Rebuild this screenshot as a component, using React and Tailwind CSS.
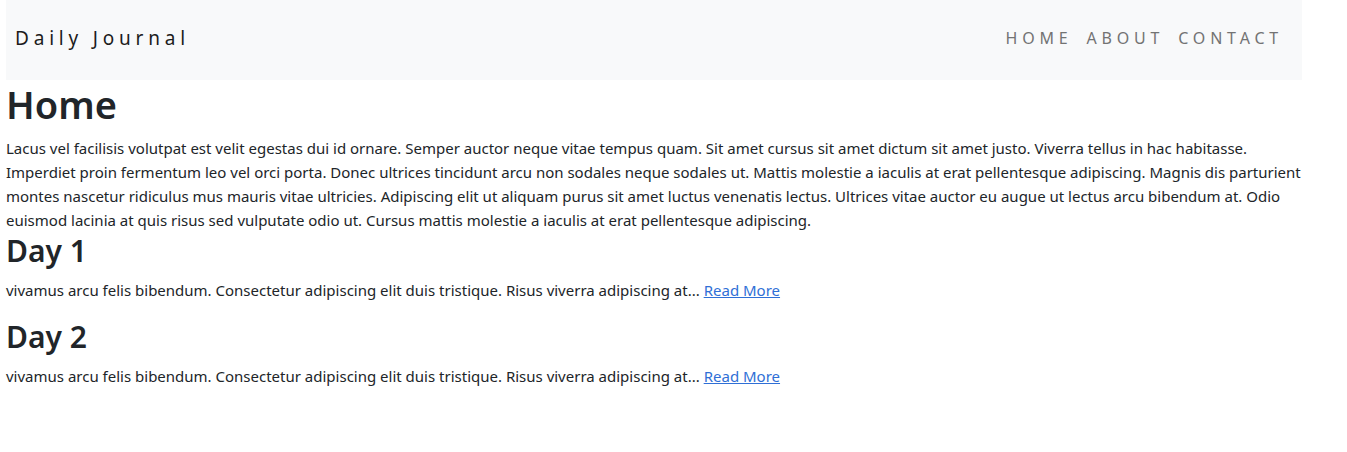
const posts = [
  {
    id: 1,
    title: "Day 1",
    excerpt:
      "vivamus arcu felis bibendum. Consectetur adipiscing elit duis tristique. Risus viverra adipiscing at...",
  },
  {
    id: 2,
    title: "Day 2",
    excerpt:
      "vivamus arcu felis bibendum. Consectetur adipiscing elit duis tristique. Risus viverra adipiscing at...",
  },
];

const App = () => {
  return (
    <div className="w-[1296px] mx-[6px] font-['Noto_Sans','Open_Sans',sans-serif] text-[#212529]">
      <nav className="flex h-20 items-center justify-between bg-[#f8f9fa] pb-[4px] pl-[9px] pr-[12px]">
        <a className="text-[19px] tracking-[4.8px] text-[#1c1c1c]">Daily Journal</a>
        <ul className="flex">
          <li className="px-[7px] text-[16px] tracking-[4.8px] text-[#737373]">HOME</li>
          <li className="px-[7px] text-[16px] tracking-[4.8px] text-[#737373]">ABOUT</li>
          <li className="px-[7px] text-[16px] tracking-[4.8px] text-[#737373]">CONTACT</li>
        </ul>
      </nav>

      <h1 className="mb-2 text-[38px] font-semibold leading-[48px]">Home</h1>
      <p className="text-[15px] leading-6">
        Lacus vel facilisis volutpat est velit egestas dui id ornare. Semper auctor neque vitae tempus quam. Sit amet
        cursus sit amet dictum sit amet justo. Viverra tellus in hac habitasse. Imperdiet proin fermentum leo vel orci
        porta. Donec ultrices tincidunt arcu non sodales neque sodales ut. Mattis molestie a iaculis at erat
        pellentesque adipiscing. Magnis dis parturient montes nascetur ridiculus mus mauris vitae ultricies. Adipiscing
        elit ut aliquam purus sit amet luctus venenatis lectus. Ultrices vitae auctor eu augue ut lectus arcu bibendum
        at. Odio euismod lacinia at quis risus sed vulputate odio ut. Cursus mattis molestie a iaculis at erat
        pellentesque adipiscing.
      </p>

      {posts.map((post) => (
        <div key={post.id}>
          <h2 className="mb-2 text-[30px] font-semibold leading-[38px]">{post.title}</h2>
          <p className="mb-4 text-[15px] leading-6">
            {post.excerpt}{" "}
            <a href="#" className="text-[#2f6fd6] underline">
              Read More
            </a>
          </p>
        </div>
      ))}
    </div>
  );
};

export default App;
